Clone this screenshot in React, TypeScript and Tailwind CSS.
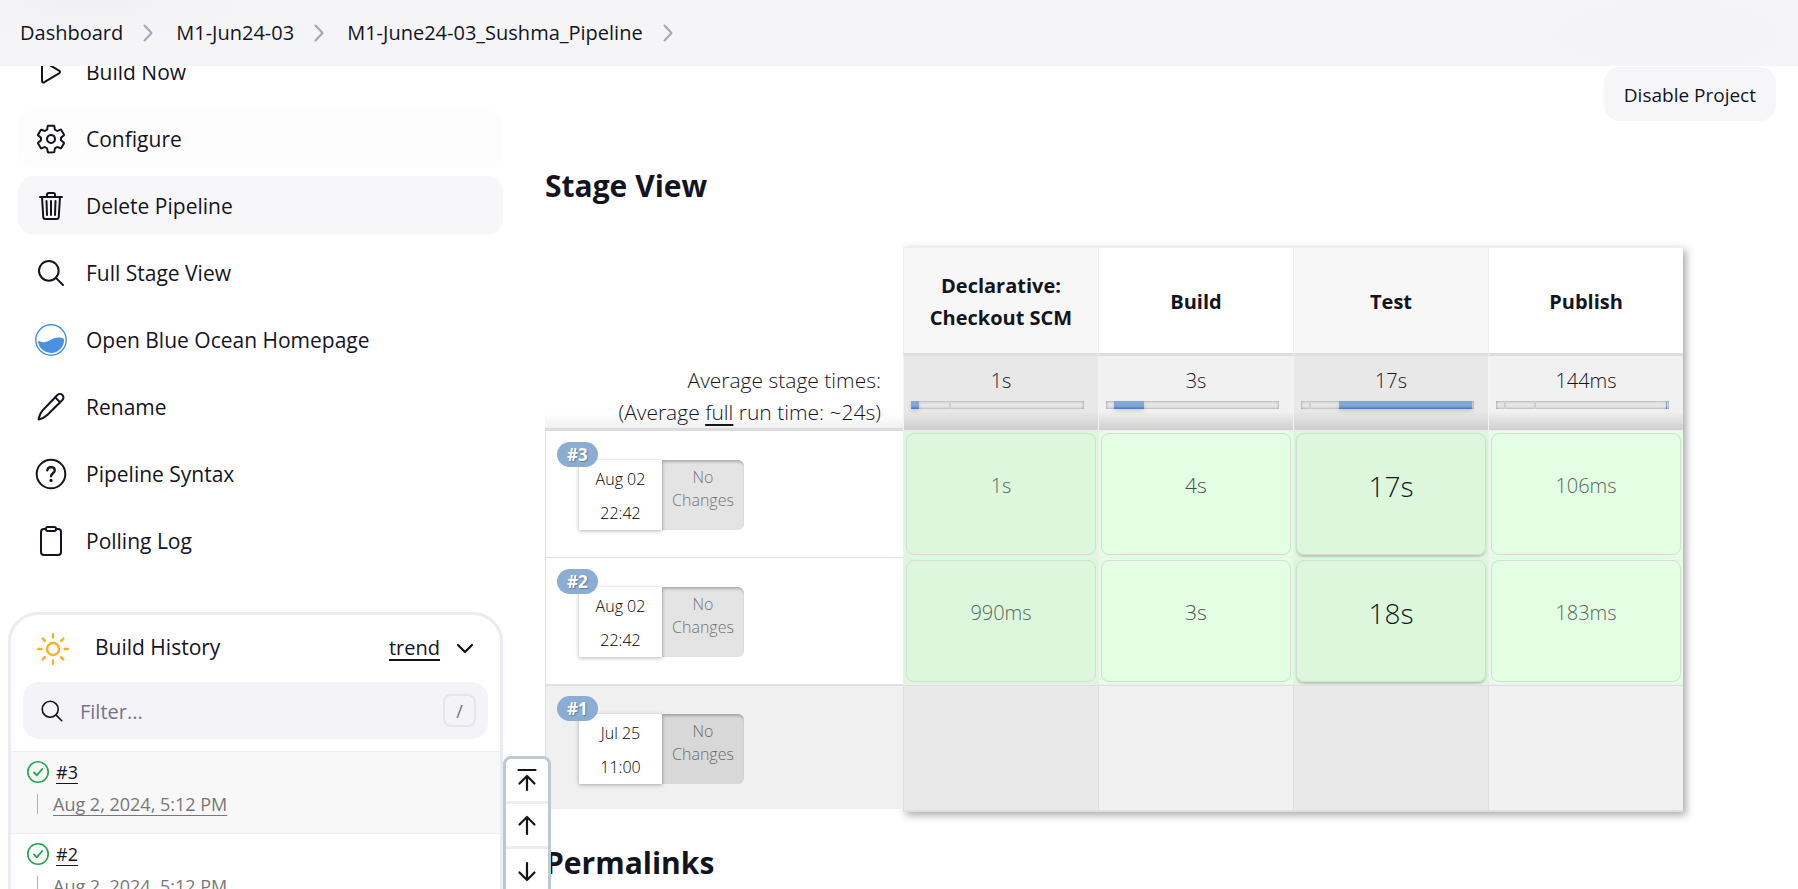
import type { ReactNode } from "react";
import {
  IoClipboardOutline,
  IoPlayOutline,
  IoSearchOutline,
  IoSettingsOutline,
  IoTrashOutline,
} from "react-icons/io5";

const PencilIcon = () => (
  <svg viewBox="0 0 32 32" className="size-8" fill="none" stroke="currentColor" strokeWidth="2" strokeLinecap="round" strokeLinejoin="round">
    <path d="M22.4 4a3.5 3.5 0 0 1 5 5L12.6 23.800C10.400 26 7.600 27.600 3.600 28.400 4.400 24.400 5.800 21.200 8 19Z" />
    <path d="m20.200 6.400 4.800 4.800" />
  </svg>
);

const HelpIcon = () => (
  <svg viewBox="0 0 32 32" className="size-8" fill="none" stroke="currentColor" strokeWidth="2" strokeLinecap="round" strokeLinejoin="round">
    <circle cx="16" cy="16" r="14.300" />
    <path d="M12.300 12.400c.2-2 1.800-3.200 3.800-3.200 2.100 0 3.700 1.200 3.700 3.100 0 2.900-3.800 3-3.800 6" strokeWidth="2.300" />
    <circle cx="16" cy="22.400" r="1.600" fill="currentColor" stroke="none" />
  </svg>
);

const BlueOceanIcon = () => (
  <svg viewBox="0 0 32 32" className="size-8" fill="none">
    <circle cx="16" cy="16" r="15.200" stroke="#4a90e2" strokeWidth="1.400" />
    <path d="M3 16.800c3.600 1.800 7.200 2 11.400-.4 4.600-2.800 10-4 14.600-1.400A13 13 0 0 1 3 16.800Z" fill="#4a90e2" />
  </svg>
);

const SunIcon = () => (
  <svg viewBox="0 0 32 32" className="size-8" fill="none" stroke="#feb018" strokeWidth="2.400" strokeLinecap="round">
    <circle cx="16" cy="16" r="6" />
    <path d="M16 1.200v3.300M16 27.500v3.300M1.200 16h3.300M27.500 16h3.300M5.600 5.600l2.300 2.300M24.100 24.100l2.300 2.300M5.600 26.400l2.300-2.300M24.100 7.900l2.300-2.300" />
  </svg>
);

const CheckIcon = () => (
  <svg viewBox="0 0 24 24" className="size-6" fill="none" stroke="#1ea64b" strokeLinecap="round" strokeLinejoin="round">
    <circle cx="12" cy="12" r="10.200" strokeWidth="1.600" />
    <path d="m8 12.500 2.800 2.800L16.200 9" strokeWidth="1.800" />
  </svg>
);

const CrumbChevron = () => (
  <svg viewBox="0 0 10 18" className="h-[18px] w-2.5" fill="none" stroke="#a5a5b8" strokeWidth="2" strokeLinecap="round" strokeLinejoin="round" aria-hidden="true">
    <path d="m1.500 1.500 7 7.500-7 7.500" />
  </svg>
);

const arrows: { label: string; path: string }[] = [
  { label: "Scroll to top", path: "M3.500 2h17M12 22V8M4.500 15.500 12 8l7.500 7.500" },
  { label: "Scroll up", path: "M12 21V4M4.500 11.500 12 4l7.500 7.500" },
  { label: "Scroll down", path: "M12 3v17M4.500 12.500 12 20l7.500-7.500" },
];

const tasks: { label: string; icon: ReactNode; tone: string }[] = [
  { label: "Build Now", icon: <IoPlayOutline className="size-8" />, tone: "" },
  { label: "Configure", icon: <IoSettingsOutline className="size-8" />, tone: "bg-[#fdfdfd]" },
  { label: "Delete Pipeline", icon: <IoTrashOutline className="size-8" />, tone: "bg-[#f7f7fa]" },
  { label: "Full Stage View", icon: <IoSearchOutline className="size-8" />, tone: "" },
  { label: "Open Blue Ocean Homepage", icon: <BlueOceanIcon />, tone: "" },
  { label: "Rename", icon: <PencilIcon />, tone: "" },
  { label: "Pipeline Syntax", icon: <HelpIcon />, tone: "" },
  { label: "Polling Log", icon: <IoClipboardOutline className="size-8" />, tone: "" },
];

const builds = [
  { id: "#3", time: "Aug 2, 2024, 5:12 PM", tone: "bg-[#f8f8f8]" },
  { id: "#2", time: "Aug 2, 2024, 5:12 PM", tone: "bg-white" },
];

const stages = [
  { name: "Declarative: Checkout SCM", average: "1s", start: 0, width: 8, ticks: [38] },
  { name: "Build", average: "3s", start: 8, width: 30, ticks: [] },
  { name: "Test", average: "17s", start: 38, width: 133, ticks: [8] },
  { name: "Publish", average: "144ms", start: 170, width: 1, ticks: [8, 38] },
];

const runs = [
  { id: "#3", day: "Aug 02", time: "22:42", durations: ["1s", "4s", "17s", "106ms"] },
  { id: "#2", day: "Aug 02", time: "22:42", durations: ["990ms", "3s", "18s", "183ms"] },
  { id: "#1", day: "Jul 25", time: "11:00", durations: [] as string[] },
];

const durationTone = [
  "text-xl text-[#56695a]",
  "text-[21px] text-[#445546]",
  "text-[28px] text-[#14141f] shadow-[0_2px_2px_rgba(0,0,0,0.18)]",
  "text-xl text-[#566b5a]",
];

function Breadcrumbs() {
  return (
    <header className="relative z-20 h-[66px] bg-[#f5f5f8] bg-[radial-gradient(ellipse_150px_40px_at_90px_0px,#f0f0f2,transparent),radial-gradient(ellipse_120px_36px_at_calc(100%-130px)_34px,#f2f2f4,transparent)]">
      <nav aria-label="Breadcrumb" className="h-full px-5">
        <ol className="flex h-full items-center gap-[23px] text-xl">
          {["Dashboard", "M1-Jun24-03", "M1-June24-03_Sushma_Pipeline"].map((crumb) => (
            <li key={crumb} className="flex items-center gap-5">
              <a href="#">{crumb}</a>
              <CrumbChevron />
            </li>
          ))}
        </ol>
      </nav>
    </header>
  );
}

function BuildHistory() {
  return (
    <section className="ml-2 mt-[42px] h-[300px] overflow-hidden rounded-t-[30px] border-[3px] border-[#ebebf3] bg-white">
      <div className="flex h-[67px] items-center pl-[26px] pr-[22px]">
        <SunIcon />
        <h2 className="ml-[26px] flex-1 pb-0.5 text-[21px]">Build History</h2>
        <a href="#" className="pb-0.5 text-xl underline decoration-2 underline-offset-4">trend</a>
        <button type="button" aria-label="Collapse build history" className="ml-3 p-1">
          <svg viewBox="0 0 18 12" className="h-3 w-[18px]" fill="none" stroke="currentColor" strokeWidth="2.200" strokeLinecap="round" strokeLinejoin="round">
            <path d="m2 2 7 7 7-7" />
          </svg>
        </button>
      </div>
      <label className="mx-3 flex h-[57px] items-center rounded-2xl bg-[#f4f3f8] pl-4 pr-3">
        <IoSearchOutline className="size-[26px]" />
        <input type="search" aria-label="Filter builds" placeholder="Filter..." className="ml-[15px] min-w-0 flex-1 bg-transparent pt-0.5 text-xl outline-none placeholder:text-[#73738c]" />
        <kbd className="grid size-[33px] place-items-center rounded-lg border-2 border-[#e5e4ef] font-[inherit] text-lg text-[#73738c]">/</kbd>
      </label>
      <ul className="mt-3">
        {builds.map((build) => (
          <li key={build.id} className={`flex h-[82px] flex-col border-t border-[#efefef] pl-[15px] pt-2 ${build.tone}`}>
            <div className="flex h-6 items-center gap-1.5">
              <CheckIcon />
              <a href="#" className="text-lg underline underline-offset-4">{build.id}</a>
            </div>
            <div className="mt-2 flex h-6 items-center gap-[15px] pl-[11px]">
              <span className="h-5 w-px bg-[#a9b2bd]" />
              <a href="#" className="text-lg text-[#77777a] underline underline-offset-4">{build.time}</a>
            </div>
          </li>
        ))}
      </ul>
    </section>
  );
}

function StageTable() {
  return (
    <div className="relative w-fit">
      <div aria-hidden="true" className="absolute inset-y-0 left-[358px] right-0 shadow-[3px_3px_8px_rgba(0,0,0,0.35)]" />
      <table className="relative table-fixed border-separate border-spacing-0 font-light">
        <thead>
          <tr className="h-[109px]">
            <td className="w-[358px] min-w-[358px] bg-white" />
            {stages.map((stage) => (
              <th key={stage.name} scope="col" className="w-[195px] min-w-[195px] border-b-[3px] border-l border-t border-b-[#dedede] border-l-[#efeff3] border-t-[#efeff3] px-5 pt-0.5 text-xl leading-8 font-bold odd:bg-white even:bg-[#f7f7f7]">
                {stage.name}
              </th>
            ))}
          </tr>
        </thead>
        <tbody>
          <tr className="h-[75px]">
            <th scope="row" className="border-b-[3px] border-[#dcdcdc] bg-linear-to-b from-white from-80% to-[#f0f0f0] pr-[22px] text-right align-bottom text-[21px] leading-8 font-light">
              Average stage times:
              <br />
              (Average <span className="underline decoration-2 underline-offset-4">full</span> run time: ~24s)
            </th>
            {stages.map((stage) => (
              <td key={stage.name} className="border-b border-l border-b-[#eeeeee] border-l-[#f4f4f4] bg-linear-to-b from-75% to-[#cfcfcf] pt-[9px] text-center align-top text-xl odd:from-[#f1f1f1] even:from-[#e8e8e8]">
                <div className="h-9 leading-8">{stage.average}</div>
                <div className="relative ml-[7px] mr-3.5 h-2 bg-[#e6e6e6] shadow-[inset_0_0_3px_rgba(0,0,0,0.4)]">
                  {stage.ticks.map((tick) => (
                    <span key={tick} className="absolute inset-y-0 w-0.5 bg-[#cfcfcf]" style={{ left: tick }} />
                  ))}
                  <span className="absolute inset-y-0 bg-linear-to-b from-[#83a9d2] from-60% to-[#4675c8] shadow-[0_2px_4px_rgba(0,0,0,0.15)]" style={{ left: stage.start, width: stage.width }} />
                </div>
              </td>
            ))}
          </tr>
          {runs.map((run) => {
            const skipped = run.durations.length === 0;
            return (
              <tr key={run.id} className="h-[127px]">
                <th scope="row" className="p-0 text-left align-top font-light">
                  <div className={skipped ? "h-[124px] border-l border-t border-[#e0e0e0] bg-[#f0f0f0] pl-[33px] pt-7" : "h-[127px] border-l border-b border-[#e0e0e0] bg-white pl-[33px] pt-[29px]"}>
                    <div className="relative flex h-[70px] w-[165px] text-center text-base">
                      <span className="absolute -left-[22px] -top-[18px] z-10 rounded-full bg-[#8badd3] px-2.5 text-[17px] leading-[25px] font-bold text-white [text-shadow:1px_1px_1px_rgba(0,0,0,0.3)]">{run.id}</span>
                      <div className="w-[83px] bg-white leading-[34px] text-black shadow-[0_1px_4px_rgba(0,0,0,0.3)]">
                        <div className="pt-0.5">{run.day}</div>
                        <div>{run.time}</div>
                      </div>
                      <div className={`w-[82px] rounded-r-md pt-1.5 leading-[23px] shadow-[inset_1px_2px_3px_rgba(0,0,0,0.25)] ${skipped ? "bg-[#d8d8d8] text-[#6c6c6c]" : "bg-[#e4e4e4] text-[#747474]"}`}>
                        No
                        <br />
                        Changes
                      </div>
                    </div>
                  </div>
                </th>
                {stages.map((stage, i) =>
                  skipped ? (
                    <td key={stage.name} className="border border-b-2 border-r-0 border-[#dfdfdf] odd:bg-[#f1f1f1] even:bg-[#e9e9e9]" />
                  ) : (
                    <td key={stage.name} className="border-b border-l border-[#eeeeee] px-0.5 py-0.5 odd:bg-[#e3fee3] even:bg-[#ddf7dd]">
                      <div className={`flex h-[122px] items-center justify-center rounded-lg border border-[#d5dbd5] pb-4 ${durationTone[i]}`}>{run.durations[i]}</div>
                    </td>
                  ),
                )}
              </tr>
            );
          })}
        </tbody>
      </table>
    </div>
  );
}

export default function App() {
  return (
    <div className="h-screen overflow-hidden bg-white font-['Open_Sans','Noto_Sans',sans-serif] text-[#14141f]">
      <Breadcrumbs />
      <div className="flex items-start">
        <aside className="-mt-6 w-[503px] shrink-0">
          <nav aria-label="Project tasks" className="ml-[18px] flex flex-col gap-2">
            {tasks.map((task) => (
              <a key={task.label} href="#" className={`flex h-[59px] items-center gap-[19px] rounded-2xl pl-[17px] text-[21px] ${task.tone}`}>
                <span className="grid size-8 place-items-center">{task.icon}</span>
                <span className="pt-0.5">{task.label}</span>
              </a>
            ))}
          </nav>
          <BuildHistory />
        </aside>
        <div role="toolbar" aria-label="Scroll" className="relative z-10 mt-[690px] flex w-12 shrink-0 flex-col divide-y-[3px] divide-[#eeeeee] rounded-lg border-[3px] border-[#bfc9ce] bg-white">
          {arrows.map((arrow) => (
            <button key={arrow.label} type="button" aria-label={arrow.label} className="grid h-[45px] place-items-center">
              <svg viewBox="0 0 24 24" className="size-6" fill="none" stroke="currentColor" strokeWidth="2.200" strokeLinecap="round" strokeLinejoin="round">
                <path d={arrow.path} />
              </svg>
            </button>
          ))}
        </div>
        <main className="-ml-1.5 min-w-0 flex-1 pr-[22px]">
          <div className="flex justify-end pt-px">
            <button type="button" className="h-[54px] rounded-2xl bg-[#f6f6f9] px-5 pt-0.5 text-[19px]">Disable Project</button>
          </div>
          <h2 className="mt-[43px] mb-10 text-3xl leading-[43px] font-bold">Stage View</h2>
          <StageTable />
          <h2 className="mt-[29px] text-3xl leading-[43px] font-bold">Permalinks</h2>
        </main>
      </div>
    </div>
  );
}
